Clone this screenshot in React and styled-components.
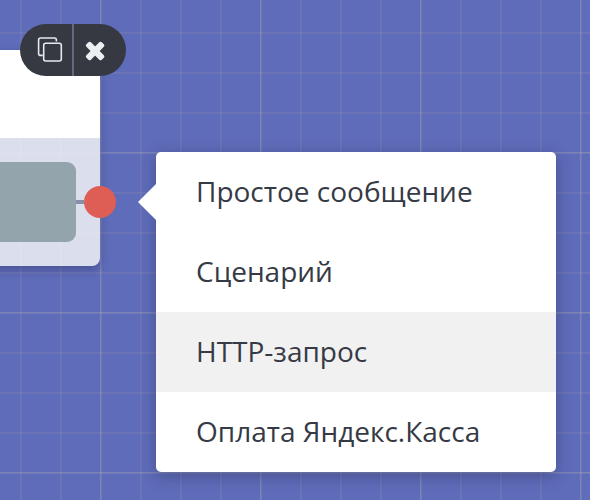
import React from "react";
import styled, { createGlobalStyle } from "styled-components";

const GlobalStyle = createGlobalStyle`
  * { box-sizing: border-box; }
  body { margin: 0; overflow: hidden; }
`;

const minor = "rgba(164, 153, 180, 0.22) 0 1px, rgba(164, 153, 180, 0.13) 1px 2px, transparent 2px";
const major = "rgba(170, 172, 180, 0.27) 0 1px, rgba(170, 172, 180, 0.12) 1px 2px, transparent 2px";

const Canvas = styled.main`
  position: relative;
  width: 590px;
  height: 500px;
  overflow: hidden;
  background-color: #5f6cb9;
  background-image:
    linear-gradient(90deg, ${major}),
    linear-gradient(180deg, ${major}),
    linear-gradient(90deg, ${minor}),
    linear-gradient(180deg, ${minor});
  background-size: 160px 160px, 160px 160px, 40px 40px, 40px 40px;
  background-position: 100px 0, 0 152px, 20px 0, 0 32px;
  font-family: "Open Sans", "Noto Sans", sans-serif;
`;

const Node = styled.section`
  position: absolute;
  left: -40px;
  top: 50px;
  width: 140px;
  height: 216px;
  display: flex;
  flex-direction: column;
  border-radius: 0 0 8px 8px;
  box-shadow: 0 4px 10px rgba(30, 35, 80, 0.35);
`;

const NodeHeader = styled.header`
  height: 88px;
  background: #fff;
`;

const bodyLine = "rgba(228, 226, 236, 0.35) 0 2px, transparent 2px";

const NodeBody = styled.div`
  flex: 1;
  display: flex;
  align-items: center;
  background-color: #dbdeec;
  background-image: linear-gradient(90deg, ${bodyLine}), linear-gradient(180deg, ${bodyLine});
  background-size: 40px 40px;
  background-position: 20px 0, 0 14px;
  border-radius: 0 0 8px 8px;
`;

const NodeContent = styled.div`
  flex: none;
  width: 116px;
  height: 80px;
  background: #93a4ac;
  border-radius: 0 9px 9px 0;
`;

const Connector = styled.span`
  flex: none;
  width: 8px;
  height: 4px;
  background: #888da8;
`;

const Port = styled.span`
  flex: none;
  width: 32px;
  height: 32px;
  border-radius: 50%;
  background: #de5e56;
`;

const Toolbar = styled.div`
  position: absolute;
  left: 20px;
  top: 24px;
  width: 106px;
  height: 52px;
  display: flex;
  border-radius: 26px;
  overflow: hidden;
  background: #363942;
`;

const ToolButton = styled.button`
  width: ${(p) => p.$width}px;
  padding: 0;
  border: 0;
  border-left: ${(p) => (p.$divided ? "2px solid #646a7d" : "0")};
  background: transparent;
  svg { display: block; }
`;

const Menu = styled.nav`
  position: absolute;
  left: 156px;
  top: 152px;
  width: 400px;
  display: flex;
  flex-direction: column;
  background: #fff;
  border-radius: 5px;
  box-shadow: 0 4px 16px rgba(35, 40, 80, 0.4);
`;

const Pointer = styled.span`
  position: absolute;
  left: -18px;
  top: 32px;
  width: 18px;
  height: 36px;
  background: #fff;
  clip-path: polygon(100% 0, 0 50%, 100% 100%);
`;

const MenuItem = styled.button`
  height: 80px;
  padding: 0 40px 2px;
  border: 0;
  background: ${(p) => (p.$active ? "#f1f1f1" : "transparent")};
  color: #363a45;
  font: 400 28px/78px "Open Sans", "Noto Sans", sans-serif;
  text-align: left;
  white-space: nowrap;
`;

const items = [
  { label: "Простое сообщение" },
  { label: "Сценарий" },
  { label: "HTTP-запрос", active: true },
  { label: "Оплата Яндекс.Касса" },
];

const CopyIcon = () => (
  <svg width="52" height="52" viewBox="0 0 52 52" fill="none" stroke="#e6eaec" strokeWidth="1.6">
    <path d="M36.4 17.5V16a2 2 0 0 0-2-2H20.6a2 2 0 0 0-2 2v13.4a2 2 0 0 0 2 2h2.2" />
    <rect x="23.7" y="19.2" width="17.6" height="17.8" rx="2" />
  </svg>
);

const CloseIcon = () => (
  <svg width="52" height="52" viewBox="0 0 52 52" fill="#ebeff1">
    <g transform="translate(21.1 27)">
      <rect x="-10.9" y="-3.25" width="21.8" height="6.5" rx="1.8" transform="rotate(45)" />
      <rect x="-10.9" y="-3.25" width="21.8" height="6.5" rx="1.8" transform="rotate(-45)" />
    </g>
  </svg>
);

export default function App() {
  return (
    <>
      <GlobalStyle />
      <Canvas>
        <Node>
          <NodeHeader />
          <NodeBody>
            <NodeContent />
            <Connector />
            <Port />
          </NodeBody>
        </Node>
        <Toolbar>
          <ToolButton $width={52} aria-label="Копировать"><CopyIcon /></ToolButton>
          <ToolButton $width={54} $divided aria-label="Удалить"><CloseIcon /></ToolButton>
        </Toolbar>
        <Menu>
          <Pointer />
          {items.map((item) => (
            <MenuItem key={item.label} $active={item.active}>{item.label}</MenuItem>
          ))}
        </Menu>
      </Canvas>
    </>
  );
}
